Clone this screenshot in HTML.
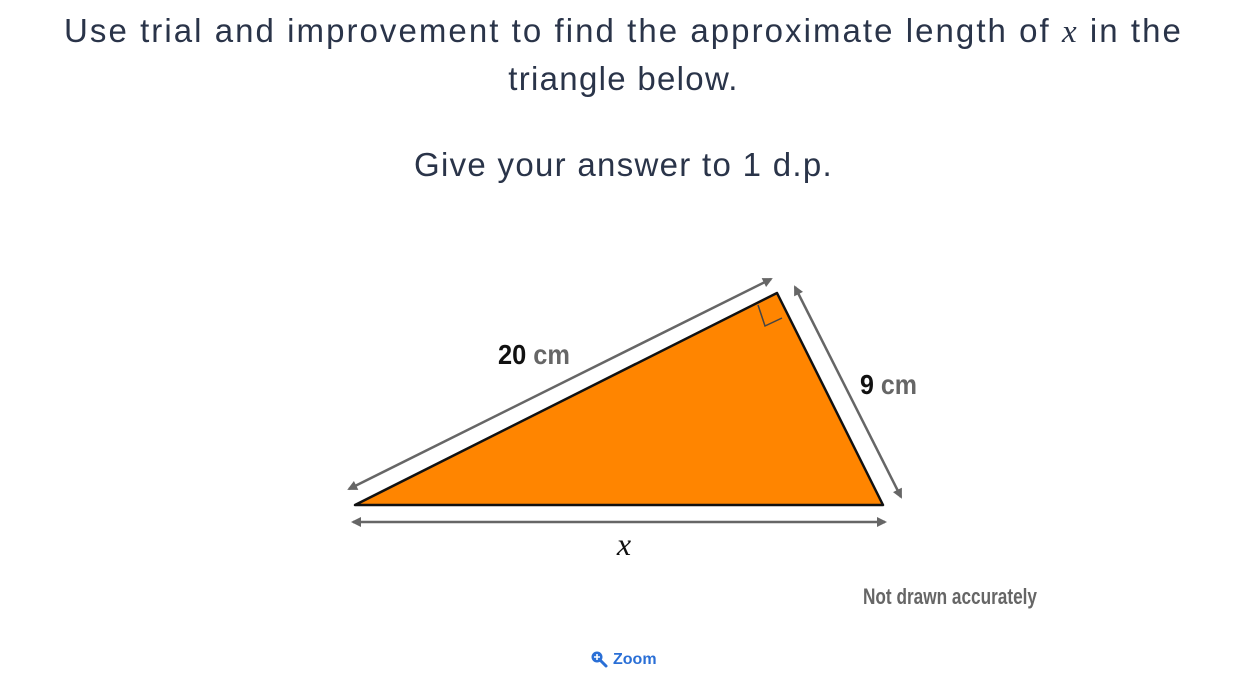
<!DOCTYPE html>
<html><head><meta charset="utf-8"><style>
html,body{margin:0;padding:0;background:#fff;width:1247px;height:691px;overflow:hidden;font-family:"Liberation Sans",sans-serif;color:#2a3449}
.l{position:absolute;left:0;width:1247px;text-align:center;font-size:33px;white-space:nowrap;line-height:40px;letter-spacing:1.3px}
i.x{font-family:"Liberation Serif",serif;font-style:italic}
</style></head><body>
<div class="l" style="top:11px;letter-spacing:2.05px">Use trial and improvement to find the approximate length of <i class="x">x</i> in the</div>
<div class="l" style="top:59px">triangle below.</div>
<div class="l" style="top:145px">Give your answer to 1 d.p.</div>
<svg width="1247" height="691" style="position:absolute;left:0;top:0">
<defs><marker id="a" markerWidth="10" markerHeight="10" refX="8" refY="5" orient="auto-start-reverse" markerUnits="userSpaceOnUse"><path d="M0,0 L10,5 L0,10 z" fill="#666"/></marker></defs>
<polygon points="355,505 777,293 883,505" fill="#ff8500" stroke="#111" stroke-width="2.5" stroke-linejoin="round"/>
<polyline points="758,305 765,326 782,318" fill="none" stroke="#444" stroke-width="1.5"/>
<line x1="349" y1="489" x2="771" y2="279" stroke="#666" stroke-width="2.5" marker-start="url(#a)" marker-end="url(#a)"/>
<line x1="795" y1="287" x2="901" y2="497" stroke="#666" stroke-width="2.5" marker-start="url(#a)" marker-end="url(#a)"/>
<line x1="353" y1="522" x2="885" y2="522" stroke="#666" stroke-width="2.5" marker-start="url(#a)" marker-end="url(#a)"/>
<text x="498" y="364" font-family="Liberation Sans,sans-serif" font-weight="bold" font-size="28" fill="#111" textLength="72" lengthAdjust="spacingAndGlyphs">20 <tspan fill="#666">cm</tspan></text>
<text x="860" y="394" font-family="Liberation Sans,sans-serif" font-weight="bold" font-size="28" fill="#111" textLength="57" lengthAdjust="spacingAndGlyphs">9 <tspan fill="#666">cm</tspan></text>
<text x="624" y="555" text-anchor="middle" font-family="Liberation Serif,serif" font-style="italic" font-size="32" fill="#111">x</text>
<text x="863" y="604" font-family="Liberation Sans,sans-serif" font-weight="bold" font-size="22" fill="#666" textLength="174" lengthAdjust="spacingAndGlyphs">Not drawn accurately</text>
<circle cx="597" cy="657" r="5.5" fill="#2a6fd6"/>
<line x1="601" y1="661" x2="606" y2="666" stroke="#2a6fd6" stroke-width="3" stroke-linecap="round"/>
<path d="M597,654v6M594,657h6" stroke="#fff" stroke-width="1.6"/>
<text x="613" y="664" font-family="Liberation Sans,sans-serif" font-weight="bold" font-size="16" fill="#2a6fd6">Zoom</text>
</svg>
</body></html>
